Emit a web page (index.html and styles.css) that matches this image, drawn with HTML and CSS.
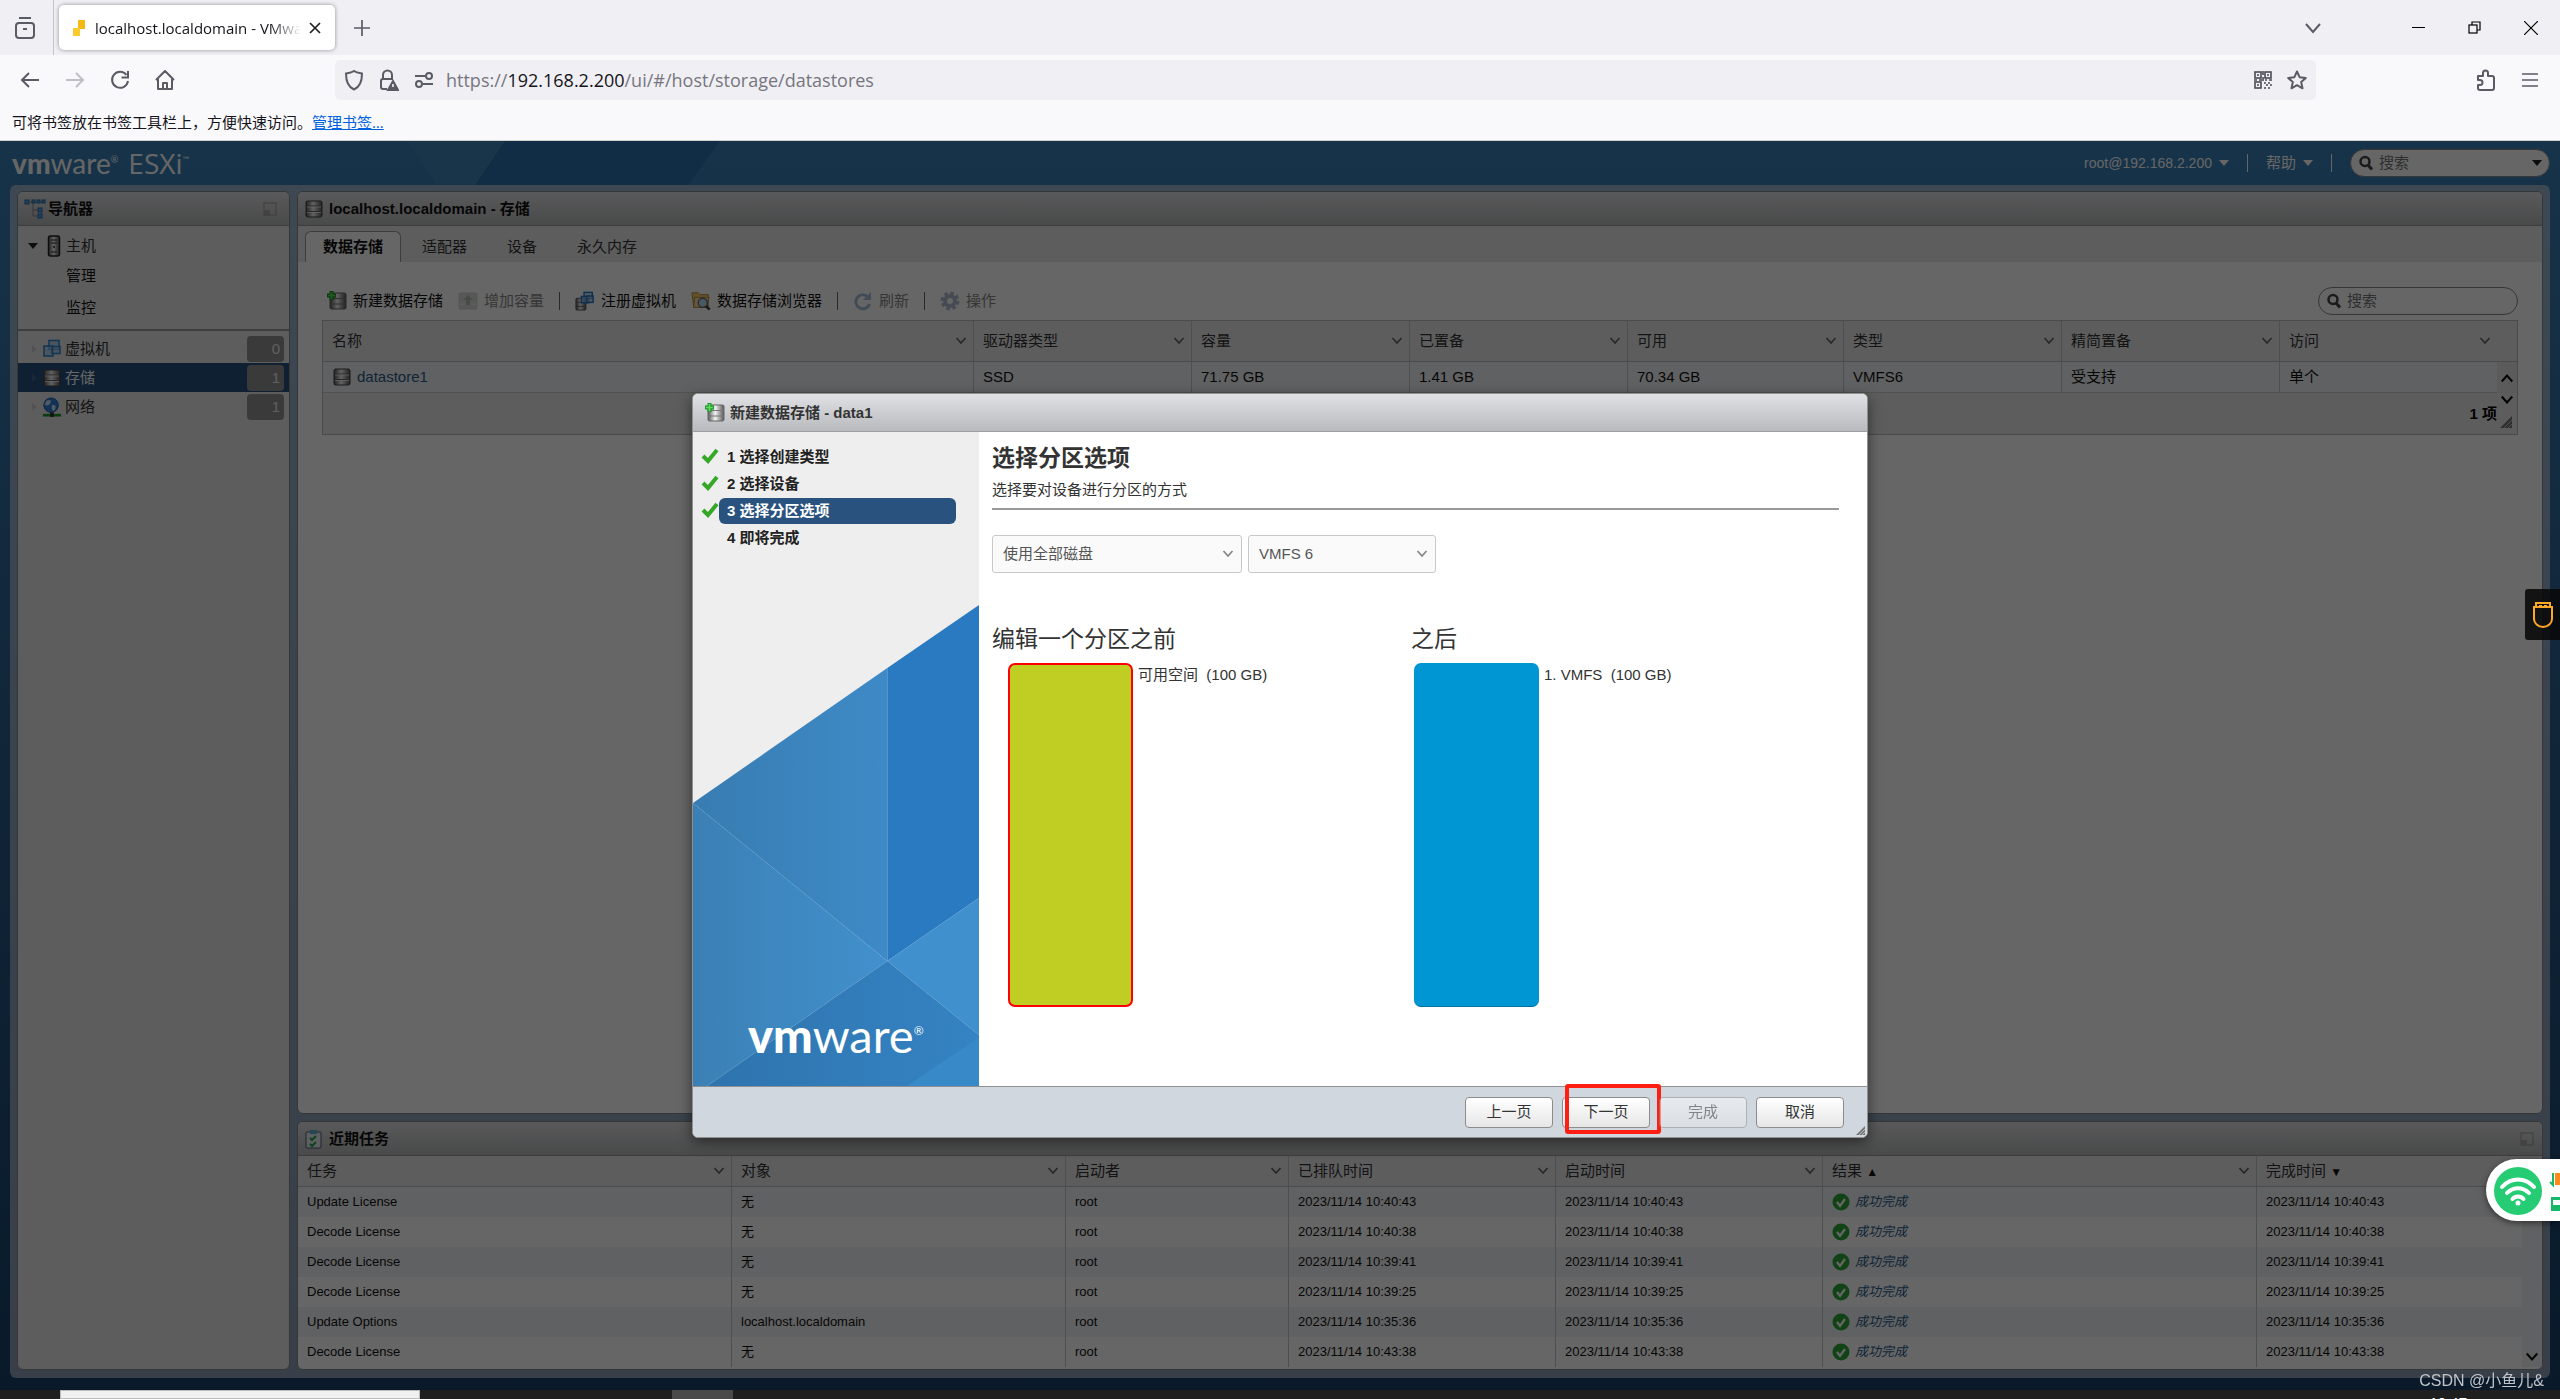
FILE: index.html
```html
<!DOCTYPE html>
<html lang="zh-CN">
<head>
<meta charset="utf-8">
<title>localhost.localdomain - VMware ESXi</title>
<link rel="stylesheet" href="styles.css">
</head>
<body>
<svg class="sprite" aria-hidden="true">
  <defs>
    <linearGradient id="metal" x1="0" x2="1" y1="0" y2="0"><stop offset="0" stop-color="#555"/><stop offset=".45" stop-color="#f4f4f4"/><stop offset="1" stop-color="#555"/></linearGradient>
    <linearGradient id="left-blue" x1="0" x2="1" y1="0" y2="0"><stop offset="0" stop-color="#3b80b5"/><stop offset="1" stop-color="#4190cd"/></linearGradient>
    <linearGradient id="low-blue" x1="0" x2="1" y1="0" y2="0"><stop offset="0" stop-color="#2e74ae"/><stop offset="1" stop-color="#3583c3"/></linearGradient>
  </defs>
  <symbol id="i-store" viewBox="0 0 18 18"><rect x="1" y="1" width="16" height="16" rx="1.500" fill="url(#metal)" stroke="#444"/><path d="M2 6h14M2 11.500h14" stroke="#666"/><path d="M2 7h14M2 12.500h14" stroke="#fff" opacity=".7"/></symbol>
  <symbol id="i-newstore" viewBox="0 0 20 20"><rect x="3" y="2" width="16" height="16" rx="1.500" fill="url(#metal)" stroke="#666"/><path d="M3 7.500h16M3 13h16" stroke="#777"/><path d="M4.500 0v9M0 4.500h9" stroke="#1f9a2c" stroke-width="4"/><path d="M4.500 1v7M1 4.500h7" stroke="#5fdc5f" stroke-width="1.500"/></symbol>
  <symbol id="i-grow" viewBox="0 0 20 20"><rect x="1" y="2" width="18" height="16" rx="1.500" fill="#b5bdb5" stroke="#a5aaa5"/><path d="M1 13h18" stroke="#ddd"/><path d="M10 4l-5 5h3v5h4V9h3z" fill="#6c746c"/></symbol>
  <symbol id="i-vms" viewBox="0 0 20 20"><g fill="#9cc8ee" fill-opacity=".6" stroke="#3587cf" stroke-width="1.600"><rect x="7" y="1.500" width="10" height="9"/><rect x="2" y="7" width="9" height="10"/><rect x="10" y="7.500" width="8" height="7"/></g></symbol>
  <symbol id="i-register" viewBox="0 0 22 22"><rect x="1" y="8" width="11" height="13" rx="1" fill="url(#metal)" stroke="#555"/><path d="M1 12.500h11M1 17h11" stroke="#666"/><g fill="#9cc8ee" fill-opacity=".6" stroke="#2878c6" stroke-width="1.600"><rect x="10" y="1.500" width="9" height="7"/><rect x="7" y="6" width="8" height="7"/><rect x="13" y="5.500" width="7" height="7"/></g></symbol>
  <symbol id="i-browse" viewBox="0 0 22 22"><path d="M1 2h7l2 2h9v14H3z" fill="#f3ca75" stroke="#b5842b"/><path d="M4 7h16l-3 11H3z" fill="#fbdf9f" stroke="#b5842b"/><circle cx="13" cy="13" r="5" fill="#b9dcf5" stroke="#667" stroke-width="1.500"/><path d="M16.500 16.500l4 4" stroke="#444" stroke-width="3"/></symbol>
  <symbol id="i-refresh" viewBox="0 0 20 20"><path d="M15 6a7 7 0 1 0 1.500 7" fill="none" stroke="#4f7fb5" stroke-width="3"/><path d="M18 1v8h-8z" fill="#4f7fb5"/></symbol>
  <symbol id="i-gear" viewBox="0 0 20 20"><circle cx="10" cy="10" r="7.500" fill="none" stroke="#5f7ca0" stroke-width="4" stroke-dasharray="3.400 2.500"/><circle cx="10" cy="10" r="5" fill="none" stroke="#5f7ca0" stroke-width="4"/></symbol>
  <symbol id="i-tree" viewBox="0 0 22 20"><path d="M4 3h16M9 3v14h5M9 11h5" fill="none" stroke="#888"/><g fill="#59a6df" stroke="#246ba8"><rect x="1" y="1" width="4" height="4"/><rect x="8" y="1" width="3" height="3"/><rect x="13" y="1" width="3" height="3"/><rect x="18" y="1" width="3" height="3"/><rect x="14" y="9" width="4" height="4"/><rect x="14" y="15" width="4" height="4"/></g></symbol>
  <symbol id="i-host" viewBox="0 0 14 22"><rect x="1.500" y="1" width="11" height="20" rx="2" fill="url(#metal)" stroke="#222" stroke-width="1.500"/><path d="M4 5h6M4 8h6M4 17h6" stroke="#333"/><circle cx="7" cy="12" r="1" fill="#333"/></symbol>
  <symbol id="i-net" viewBox="0 0 22 22"><circle cx="10" cy="9" r="8" fill="#2f7fd8" stroke="#1d55a0"/><path d="M5 4c4-2 6 0 4 3s-5 3-6 1zM11 9c4-1 5 2 3 5s-4-1-3-5z" fill="#cfe6fa"/><path d="M1 20h20" stroke="#1d9a2c" stroke-width="3"/><path d="M9 17h4v5H9z" fill="#333"/></symbol>
  <symbol id="i-tasks" viewBox="0 0 18 20"><rect x="1" y="3" width="15" height="16" rx="1" fill="#e6f1f5" stroke="#557"/><path d="M5 1h7v4H5z" fill="#5fb0d6"/><path d="M5 9l2 2 4-4M5 15l2 2 4-4" fill="none" stroke="#2ea043" stroke-width="2"/></symbol>
  <symbol id="i-check" viewBox="0 0 18 18"><path d="M2 8l5 5L16 2" fill="none" stroke="#35a828" stroke-width="4"/></symbol>
  <symbol id="i-ok" viewBox="0 0 18 18"><circle cx="9" cy="9" r="8.500" fill="#2fa83a"/><path d="M5 9l3 4 5-7" fill="none" stroke="#fff" stroke-width="2.200"/></symbol>
  <symbol id="i-chev" viewBox="0 0 12 12"><path d="M1.500 3L6 8 10.500 3" fill="none" stroke="currentColor" stroke-width="1.800"/></symbol>
  <symbol id="i-mag" viewBox="0 0 16 16"><circle cx="7" cy="6.500" r="4.500" fill="none" stroke="currentColor" stroke-width="2.500"/><path d="M10 10l4 4.500" stroke="currentColor" stroke-width="3"/></symbol>
  <symbol id="i-dock" viewBox="0 0 14 14"><rect x="1" y="1" width="12" height="12" fill="none" stroke="#888" stroke-width="1.500"/><path d="M1 8h6v6H1z" fill="#888"/></symbol>
  <symbol id="i-grip" viewBox="0 0 12 12"><path d="M12 0v12H0z" fill="#777"/><path d="M12 4l-8 8M12 8l-4 4" stroke="#ccc"/></symbol>
</svg>

<header class="browser">
  <div class="tabstrip">
    <button class="ib view" aria-label="Firefox View"><svg width="20" height="24" viewBox="0 0 20 24" fill="none" stroke="#5b5b66" stroke-width="2"><rect x="1" y="7" width="18" height="15" rx="3"/><path d="M4 2h12M8 13h4"/></svg></button>
    <div class="tab">
      <svg width="16" height="18" viewBox="0 0 16 18"><path d="M7 1h7v9H7z" fill="#f5b915"/><path d="M2 9h7v8H2z" fill="#fbcb2e"/></svg>
      <span class="tab-title">localhost.localdomain - VMware ESXi</span>
      <button class="ib" aria-label="关闭标签页"><svg width="12" height="12" viewBox="0 0 12 12" stroke="#222" stroke-width="1.700"><path d="M1 1l10 10M11 1L1 11"/></svg></button>
    </div>
    <button class="ib" aria-label="新标签页"><svg width="16" height="16" viewBox="0 0 16 16" stroke="#5b5b66" stroke-width="1.700"><path d="M8 0v16M0 8h16"/></svg></button>
    <div class="win">
      <button class="ib" aria-label="标签列表"><svg width="16" height="12" viewBox="0 0 16 12" fill="none" stroke="#5b5b66" stroke-width="2"><path d="M1 2l7 8 7-8"/></svg></button>
      <button class="ib" aria-label="最小化"><svg width="13" height="12" viewBox="0 0 13 12" stroke="#000"><path d="M0 5.500h13"/></svg></button>
      <button class="ib" aria-label="还原"><svg width="13" height="13" viewBox="0 0 13 13" fill="none" stroke="#000" stroke-width="1.200"><path d="M4 4V1h8v8H9"/><rect x="1" y="4" width="8" height="8"/></svg></button>
      <button class="ib" aria-label="关闭"><svg width="14" height="14" viewBox="0 0 14 14" stroke="#000" stroke-width="1.200"><path d="M0 0l14 14M14 0L0 14"/></svg></button>
    </div>
  </div>
  <div class="navbar">
    <div class="nav-left">
      <button class="ib" aria-label="后退"><svg width="20" height="20" viewBox="0 0 20 20" fill="none" stroke="#5b5b66" stroke-width="2"><path d="M19 10H2M9 3l-7 7 7 7"/></svg></button>
      <button class="ib" aria-label="前进"><svg width="20" height="20" viewBox="0 0 20 20" fill="none" stroke="#bfbfc8" stroke-width="2"><path d="M1 10h17M11 3l7 7-7 7"/></svg></button>
      <button class="ib" aria-label="刷新"><svg width="20" height="20" viewBox="0 0 20 20" fill="none" stroke="#5b5b66" stroke-width="2"><path d="M16.500 5A8 8 0 1 0 18 11"/><path d="M18 1v6.500h-6.500"/></svg></button>
      <button class="ib" aria-label="主页"><svg width="20" height="20" viewBox="0 0 20 20" fill="none" stroke="#5b5b66" stroke-width="2" stroke-linejoin="round"><path d="M1 10l9-9 9 9M3 9v10h14V9M8 19v-6h4v6"/></svg></button>
    </div>
    <div class="urlbar">
      <svg width="20" height="22" viewBox="0 0 20 22" fill="none" stroke="#5b5b66" stroke-width="2"><path d="M10 2c3 2 5 2 8 2.500C18 12 16 18 10 20.500 4 18 2 12 2 4.500 5 4 7 4 10 2z"/></svg>
      <svg width="20" height="22" viewBox="0 0 20 22" fill="none" stroke="#5b5b66" stroke-width="2"><path d="M8 20H4a2 2 0 0 1-2-2v-6a2 2 0 0 1 2-2h10M4 10V6a4.500 4.500 0 0 1 9 0v4"/><path d="M14 12l5 9H9z" fill="#5b5b66"/><path d="M14 15v3" stroke="#fff" stroke-width="1.500"/></svg>
      <svg width="20" height="18" viewBox="0 0 20 18" fill="none" stroke="#5b5b66" stroke-width="2"><path d="M1 5h10M9 13h10"/><circle cx="15" cy="5" r="3"/><circle cx="5" cy="13" r="3"/></svg>
      <div class="url">https://<b>192.168.2.200</b>/ui/#/host/storage/datastores</div>
      <svg width="18" height="18" viewBox="0 0 18 18" fill="none" stroke="#4b4b55" stroke-width="1.600"><rect x="1" y="1" width="6" height="6"/><rect x="11" y="1" width="6" height="6"/><rect x="1" y="11" width="6" height="6"/><path d="M3 4h2M13 4h2M3 14h2M9 0v4M9 6v4M0 9h3M5 9h3M11 9h2M15 9h3M10 12h2M14 12h2M12 14h2M16 14h2M10 17h2M14 17h2"/></svg>
      <svg width="20" height="20" viewBox="0 0 20 20" fill="none" stroke="#5b5b66" stroke-width="2" stroke-linejoin="round"><path d="M10 1.500l2.600 5.700 6.200.7-4.600 4.200 1.300 6.200L10 15.200l-5.500 3.100 1.300-6.200L1.200 7.900l6.200-.7z"/></svg>
    </div>
    <div class="nav-right">
      <button class="ib" aria-label="扩展"><svg width="20" height="22" viewBox="0 0 20 22" fill="none" stroke="#5b5b66" stroke-width="2" stroke-linejoin="round"><path d="M2 7h5V4a2.500 2.500 0 0 1 5 0v3h4a2 2 0 0 1 2 2v10a2 2 0 0 1-2 2H4a2 2 0 0 1-2-2v-3h2a2.500 2.500 0 0 0 0-5H2z"/></svg></button>
      <button class="ib" aria-label="菜单"><svg width="16" height="16" viewBox="0 0 16 16" stroke="#5b5b66" stroke-width="1.600"><path d="M0 2h16M0 8h16M0 14h16"/></svg></button>
    </div>
  </div>
  <div class="bookmarks">可将书签放在书签工具栏上，方便快速访问。<a href="#">管理书签…</a></div>
</header>

<main class="app">
  <div class="topbar">
    <svg class="facets" viewBox="0 0 800 44" width="800" height="44" aria-hidden="true"><path d="M408 0h97l-30 44h-38z" fill="#3f86ba"/><path d="M505 0h215l-32 44H475z" fill="#2c70ae"/></svg>
    <div class="brand"><b>vm</b>ware<sup>®</sup> <span>ESXi</span><sup>™</sup></div>
    <div class="account">
      <button class="menu user">root@192.168.2.200 <i class="tri"></i></button>
      <i class="sep"></i>
      <button class="menu">帮助 <i class="tri"></i></button>
      <i class="sep"></i>
      <label class="search"><svg width="16" height="16"><use href="#i-mag"/></svg><input type="text" placeholder="搜索" aria-label="全局搜索"><i class="tri dark"></i></label>
    </div>
  </div>

  <div class="workspace">
    <aside class="panel nav">
      <h2 class="panel-head"><svg width="22" height="20"><use href="#i-tree"/></svg>导航器<svg class="dock" width="14" height="14"><use href="#i-dock"/></svg></h2>
      <nav class="tree">
        <div class="group">
          <a href="#" class="row host"><i class="tri dark"></i><svg width="18" height="22"><use href="#i-host"/></svg>主机</a>
          <a href="#" class="row child">管理</a>
          <a href="#" class="row child last">监控</a>
        </div>
        <a href="#" class="row item"><i class="tri side"></i><svg width="20" height="20"><use href="#i-vms"/></svg><span>虚拟机</span><b class="badge">0</b></a>
        <a href="#" class="row item active"><i class="tri side"></i><svg width="18" height="18"><use href="#i-store"/></svg><span>存储</span><b class="badge">1</b></a>
        <a href="#" class="row item"><i class="tri side"></i><svg width="20" height="20"><use href="#i-net"/></svg><span>网络</span><b class="badge">1</b></a>
      </nav>
    </aside>

    <div class="column">
      <section class="panel main">
        <h2 class="panel-head"><svg width="20" height="18"><use href="#i-store"/></svg>localhost.localdomain - 存储</h2>
        <div class="tabs">
          <button class="on">数据存储</button><button>适配器</button><button>设备</button><button>永久内存</button>
        </div>
        <div class="content">
          <div class="toolbar">
            <button><svg width="20" height="20"><use href="#i-newstore"/></svg>新建数据存储</button>
            <button disabled><svg width="20" height="20"><use href="#i-grow"/></svg>增加容量</button>
            <i class="sep"></i>
            <button><svg width="20" height="20"><use href="#i-register"/></svg>注册虚拟机</button>
            <button><svg width="20" height="20"><use href="#i-browse"/></svg>数据存储浏览器</button>
            <i class="sep"></i>
            <button disabled><svg width="20" height="20"><use href="#i-refresh"/></svg>刷新</button>
            <i class="sep"></i>
            <button disabled><svg width="20" height="20"><use href="#i-gear"/></svg>操作</button>
            <label class="search plain"><svg width="16" height="16"><use href="#i-mag"/></svg><input type="text" placeholder="搜索" aria-label="搜索数据存储"></label>
          </div>
          <div class="grid-box">
            <table class="grid stores">
              <colgroup><col><col class="w218"><col class="w218"><col class="w218"><col class="w216"><col class="w218"><col class="w218"><col class="w217"><col class="w20"></colgroup>
              <thead><tr>
                <th>名称<svg class="chev" width="12" height="12"><use href="#i-chev"/></svg></th>
                <th>驱动器类型<svg class="chev" width="12" height="12"><use href="#i-chev"/></svg></th>
                <th>容量<svg class="chev" width="12" height="12"><use href="#i-chev"/></svg></th>
                <th>已置备<svg class="chev" width="12" height="12"><use href="#i-chev"/></svg></th>
                <th>可用<svg class="chev" width="12" height="12"><use href="#i-chev"/></svg></th>
                <th>类型<svg class="chev" width="12" height="12"><use href="#i-chev"/></svg></th>
                <th>精简置备<svg class="chev" width="12" height="12"><use href="#i-chev"/></svg></th>
                <th class="end">访问<svg class="chev" width="12" height="12"><use href="#i-chev"/></svg></th>
                <th class="end"></th>
              </tr></thead>
              <tbody><tr>
                <td><a href="#"><svg width="20" height="18"><use href="#i-store"/></svg>datastore1</a></td><td>SSD</td><td>71.75 GB</td><td>1.41 GB</td><td>70.34 GB</td><td>VMFS6</td><td>受支持</td><td class="end">单个</td>
                <td class="end scroll"><svg width="14" height="14" class="up"><use href="#i-chev"/></svg></td>
              </tr></tbody>
            </table>
            <div class="grid-foot"><b>1 项</b><span class="ends"><svg width="14" height="14"><use href="#i-chev"/></svg><svg width="12" height="12"><use href="#i-grip"/></svg></span></div>
          </div>
        </div>
      </section>

      <section class="panel tasks">
        <h2 class="panel-head"><svg width="20" height="20"><use href="#i-tasks"/></svg>近期任务<svg class="dock" width="14" height="14"><use href="#i-dock"/></svg></h2>
        <table class="grid task-grid">
          <colgroup><col class="w434"><col class="w334"><col class="w223"><col class="w267"><col class="w267"><col><col class="w265"><col class="w20"></colgroup>
          <thead><tr>
            <th>任务<svg class="chev" width="12" height="12"><use href="#i-chev"/></svg></th>
            <th>对象<svg class="chev" width="12" height="12"><use href="#i-chev"/></svg></th>
            <th>启动者<svg class="chev" width="12" height="12"><use href="#i-chev"/></svg></th>
            <th>已排队时间<svg class="chev" width="12" height="12"><use href="#i-chev"/></svg></th>
            <th>启动时间<svg class="chev" width="12" height="12"><use href="#i-chev"/></svg></th>
            <th>结果 <small>▲</small><svg class="chev" width="12" height="12"><use href="#i-chev"/></svg></th>
            <th class="end">完成时间 <small>▼</small></th>
            <th class="end"></th>
          </tr></thead>
          <tbody>
            <tr><td>Update License</td><td>无</td><td>root</td><td>2023/11/14 10:40:43</td><td>2023/11/14 10:40:43</td><td><a href="#" class="res"><svg width="18" height="18"><use href="#i-ok"/></svg><em>成功完成</em></a></td><td class="end">2023/11/14 10:40:43</td><td class="end bar" rowspan="6"><svg width="14" height="14"><use href="#i-chev"/></svg></td></tr>
            <tr><td>Decode License</td><td>无</td><td>root</td><td>2023/11/14 10:40:38</td><td>2023/11/14 10:40:38</td><td><a href="#" class="res"><svg width="18" height="18"><use href="#i-ok"/></svg><em>成功完成</em></a></td><td class="end">2023/11/14 10:40:38</td></tr>
            <tr><td>Decode License</td><td>无</td><td>root</td><td>2023/11/14 10:39:41</td><td>2023/11/14 10:39:41</td><td><a href="#" class="res"><svg width="18" height="18"><use href="#i-ok"/></svg><em>成功完成</em></a></td><td class="end">2023/11/14 10:39:41</td></tr>
            <tr><td>Decode License</td><td>无</td><td>root</td><td>2023/11/14 10:39:25</td><td>2023/11/14 10:39:25</td><td><a href="#" class="res"><svg width="18" height="18"><use href="#i-ok"/></svg><em>成功完成</em></a></td><td class="end">2023/11/14 10:39:25</td></tr>
            <tr><td>Update Options</td><td>localhost.localdomain</td><td>root</td><td>2023/11/14 10:35:36</td><td>2023/11/14 10:35:36</td><td><a href="#" class="res"><svg width="18" height="18"><use href="#i-ok"/></svg><em>成功完成</em></a></td><td class="end">2023/11/14 10:35:36</td></tr>
            <tr><td>Decode License</td><td>无</td><td>root</td><td>2023/11/14 10:43:38</td><td>2023/11/14 10:43:38</td><td><a href="#" class="res"><svg width="18" height="18"><use href="#i-ok"/></svg><em>成功完成</em></a></td><td class="end">2023/11/14 10:43:38</td></tr>
          </tbody>
        </table>
      </section>
    </div>
  </div>

  <div class="overlay">
    <section class="dialog" role="dialog" aria-labelledby="dlg-title">
      <h2 class="dlg-head" id="dlg-title"><svg width="20" height="20"><use href="#i-newstore"/></svg>新建数据存储 - data1</h2>
      <div class="dlg-body">
        <aside class="steps">
          <ol>
            <li><svg width="18" height="18"><use href="#i-check"/></svg><span>1 选择创建类型</span></li>
            <li><svg width="18" height="18"><use href="#i-check"/></svg><span>2 选择设备</span></li>
            <li class="current"><svg width="18" height="18"><use href="#i-check"/></svg><span>3 选择分区选项</span></li>
            <li><i></i><span>4 即将完成</span></li>
          </ol>
          <div class="art">
            <svg viewBox="0 0 287 481" preserveAspectRatio="none" aria-hidden="true">
              <path d="M0 198L195 63V356z" fill="url(#left-blue)"/><path d="M0 198L195 63V356z" fill="#2c64a0" opacity=".12"/>
              <path d="M195 63L287 0V293L195 356z" fill="#2a7ac2"/>
              <path d="M0 198L195 356 14 481H0z" fill="url(#left-blue)"/>
              <path d="M195 356L287 293V430z" fill="#4090ce"/>
              <path d="M195 356L287 430V481H14z" fill="url(#low-blue)"/>
              <path d="M287 432V481H215z" fill="#3789c8"/>
            </svg>
            <div class="art-logo"><b>vm</b>ware<sup>®</sup></div>
          </div>
        </aside>
        <div class="pane">
          <h1>选择分区选项</h1>
          <p class="desc">选择要对设备进行分区的方式</p>
          <div class="selects">
            <label class="pick disk"><select aria-label="磁盘使用方式"><option>使用全部磁盘</option></select><svg width="12" height="12"><use href="#i-chev"/></svg></label>
            <label class="pick fs"><select aria-label="文件系统"><option>VMFS 6</option></select><svg width="12" height="12"><use href="#i-chev"/></svg></label>
          </div>
          <div class="compare">
            <div><h3>编辑一个分区之前</h3><div class="part before"><i></i><span>可用空间&nbsp; (100 GB)</span></div></div>
            <div><h3>之后</h3><div class="part after"><i></i><span>1. VMFS&nbsp; (100 GB)</span></div></div>
          </div>
        </div>
      </div>
      <footer class="dlg-foot">
        <button>上一页</button><div class="next"><button>下一页</button></div><button disabled>完成</button><button>取消</button>
        <svg class="grip" width="9" height="9"><use href="#i-grip"/></svg>
      </footer>
    </section>
  </div>
</main>

<footer class="taskbar"><i class="thumb"></i><i class="slot"></i><span class="clock">10:47</span></footer>

<div class="float usb"><svg width="20" height="28" viewBox="0 0 20 28" fill="none" stroke="#ffa726" stroke-width="2"><path d="M1 6h18v12c0 4-4 8-9 8s-9-4-9-8zM3 6V2h14v4M6 5h3M11 5h3"/></svg></div>
<div class="float wifi">
  <svg width="76" height="62" viewBox="0 0 76 62"><circle cx="32" cy="32" r="24" fill="#25cc73"/><g fill="none" stroke="#fff" stroke-width="4" stroke-linecap="round"><path d="M16 28c9-10 23-10 32 0M21 34c6-6.500 16-6.500 22 0M26.500 40c3-3.500 8-3.500 11 0"/></g><circle cx="32" cy="44" r="2.500" fill="#fff"/><path d="M67 14v12l-3-3" fill="none" stroke="#14b866" stroke-width="2"/><path d="M69 14v12h7V14z" fill="#ff8a1e"/><path d="M65 38h11v14H65z" fill="#14b866"/><path d="M67 41h9v5h-9z" fill="#fff"/></svg>
</div>
<div class="float mark">CSDN @小鱼儿&amp;</div>
</body>
</html>
```
FILE: styles.css
```css
* { box-sizing: border-box; }
body {
  margin: 0;
  height: 100vh;
  display: flex;
  flex-direction: column;
  overflow: hidden;
  font: 15px/20px "Liberation Sans", "Noto Sans CJK SC", sans-serif;
  color: #333;
}
svg { flex: none; display: block; }
i { font-style: normal; }
button, input, select { font: inherit; color: inherit; }
button { background: none; border: 0; padding: 0; }
a { color: inherit; text-decoration: none; }
h1, h2, h3, p, ol { margin: 0; padding: 0; }
.sprite { position: absolute; width: 0; height: 0; }
.ib { display: flex; align-items: center; justify-content: center; }

/* browser chrome */
.browser { background: #f9f9fb; color: #15141a; font-family: "Open Sans", "Noto Sans CJK SC", sans-serif; border-bottom: 1px solid #cfd2cc; }
.tabstrip { display: flex; align-items: center; height: 55px; background: #f0eff4; }
.view { width: 54px; height: 55px; padding-right: 4px; border-right: 1px solid #c4c4cc; margin-right: 5px; }
.tab { display: flex; align-items: center; gap: 8px; width: 276px; height: 45px; padding: 0 14px 0 12px; margin-right: 19px; background: #fff; border-radius: 5px; box-shadow: 0 0 4px rgba(0,0,0,.4); }
.tab-title { flex: 1; white-space: nowrap; overflow: hidden; mask-image: linear-gradient(90deg, #000 85%, transparent); }
.win { display: flex; margin-left: auto; margin-right: 22px; gap: 43px; align-items: center; }
.win .ib:first-child { margin-right: 48px; }
.navbar { display: flex; align-items: center; height: 50px; }
.nav-left { display: flex; gap: 25px; width: 335px; padding-left: 20px; }
.urlbar { flex: 1; display: flex; align-items: center; gap: 15px; height: 40px; padding: 0 9px; background: #f0eff4; border-radius: 5px; }
.url { flex: 1; margin-left: -3px; font-size: 18px; line-height: 24px; color: #77767e; }
.url b { font-weight: 400; color: #15141a; }
.nav-right { display: flex; align-items: center; gap: 26px; width: 244px; padding-right: 22px; justify-content: flex-end; }
.bookmarks { height: 35px; padding: 7px 12px; }
.bookmarks a { color: #0061e0; text-decoration: underline; }

/* application frame */
.app { position: relative; flex: 1; min-height: 0; display: flex; flex-direction: column; padding: 0 10px 12px; background: linear-gradient(#3a80b8, #2c6090 45%, #18406a); }
.topbar { position: relative; display: flex; align-items: center; justify-content: space-between; height: 44px; color: #fff; }
.facets { position: absolute; left: -10px; top: 0; }
.brand { position: relative; padding-left: 2px; font: 400 28px/30px Lato, sans-serif; }
.brand b { font-weight: 900; }
.brand span { margin-left: 3px; font: 400 28px/30px "Open Sans", sans-serif; }
.brand sup { font-size: 9px; line-height: 0; vertical-align: 11px; }
.account { display: flex; align-items: center; gap: 18px; }
.menu { display: flex; align-items: center; gap: 7px; }
.user { font-size: 14px; }
.sep { width: 1px; height: 18px; background: currentColor; }
.tri { border: 5px solid transparent; border-top: 6px solid currentColor; border-bottom: 0; }
.tri.dark { color: #222; }
.tri.side { border: 4px solid transparent; border-left: 5px solid #ccc; border-right: 0; margin-right: 2px; }
.active .tri.side { border-left-color: #3d6490; }
.search { display: flex; align-items: center; gap: 5px; width: 200px; height: 28px; padding: 0 7px; color: #444; border: 1px solid #888; border-radius: 14px; background: #fff; }
.search input { flex: 1; min-width: 0; border: 0; padding: 0; background: none; outline: 0; }
.search input::placeholder { color: #777; opacity: 1; }
.workspace { flex: 1; min-height: 0; display: flex; gap: 7px; padding: 6px 7px 8px; border-radius: 6px; background: linear-gradient(#98b4cf, #8c9eb4); }
.column { flex: 1; min-width: 0; display: flex; flex-direction: column; gap: 7px; }
.panel { display: flex; flex-direction: column; overflow: hidden; border: 1px solid #888; border-radius: 6px; background: #fff; }
.panel-head { display: flex; align-items: center; gap: 5px; height: 34px; padding: 0 8px 0 6px; font-size: 15px; line-height: 20px; font-weight: 700; color: #111; background: linear-gradient(#dfe0e3, #b8b9bb); border-bottom: 1px solid #999; }
.dock { margin-left: auto; opacity: .5; }
.nav { width: 273px; background: #e8e9eb; }
.nav .panel-head { gap: 2px; padding-right: 12px; }
.group { padding: 5px 0 4px; border-bottom: 2px solid #999; margin-bottom: 3px; }
.row { display: flex; align-items: center; height: 30px; padding-left: 10px; }
.host .tri { margin-right: 7px; }
.host svg { margin-right: 3px; }
.child { height: 29px; padding-left: 48px; color: #111; }
.last { height: 35px; }
.item { height: 29px; gap: 3px; padding-left: 14px; padding-right: 5px; }
.item svg { width: 20px; }
.item.active { background: #29527f; color: #fff; }
.badge { width: 37px; height: 26px; margin-left: auto; padding: 3px 4px; text-align: right; font-weight: 400; color: #eee; background: #929292; border-radius: 4px; }
.main { flex: 1; min-height: 0; }
.tabs { display: flex; align-items: flex-end; height: 36px; padding: 0 7px; background: #e8e9eb; }
.tabs button { height: 31px; padding: 0 20px; }
.tabs .on { padding: 0 17px; margin-right: 1px; font-weight: 700; color: #111; background: #fff; border: 1px solid #999; border-bottom: 0; border-radius: 6px 6px 0 0; }
.content { padding: 24px 24px 0; }
.toolbar { display: flex; align-items: center; gap: 15px; height: 34px; padding: 0 0 4px 5px; color: #111; }
.toolbar button { display: flex; align-items: center; gap: 6px; }
.toolbar button:disabled { color: #888; }
.toolbar button:disabled svg { opacity: .5; }
.toolbar .sep { background: #666; }
.plain { margin-left: auto; }
.grid-box { border: 1px solid #bbb; background: #e8e9eb; }
.grid { width: 100%; table-layout: fixed; border-spacing: 0; }
.grid th, .grid td { padding: 0 9px; text-align: left; font-weight: 400; border-right: 1px solid #c4c5c8; overflow: hidden; white-space: nowrap; }
.grid th { height: 41px; background: #e8e9eb; border-bottom: 1px solid #bbb; }
.grid td { color: #111; }
.grid .end { border-right: 0; }
.stores td { height: 31px; background: #f1f2f4; border-bottom: 1px solid #ccc; }
.stores a { display: flex; gap: 5px; align-items: center; color: #2b5c8c; }
.stores .scroll { padding: 0 3px; background: #e4e4e4; border-bottom: 0; }
.up { transform: rotate(180deg); }
.chev { float: right; margin: 4px -3px 0 0; color: #666; }
.grid small { font-size: 12px; color: #111; }
.grid-foot { display: flex; justify-content: flex-end; height: 41px; color: #000; line-height: 41px; }
.ends { display: flex; flex-direction: column; justify-content: space-between; width: 20px; padding: 0 0 6px 3px; }
.w20 { width: 20px; } .w216 { width: 216px; } .w217 { width: 217px; } .w218 { width: 218px; }
.w223 { width: 223px; } .w265 { width: 265px; } .w267 { width: 267px; } .w334 { width: 334px; } .w434 { width: 434px; }
.tasks { height: 249px; }
.task-grid th { height: 31px; }
.task-grid td { height: 30px; font-size: 13px; }
.task-grid tbody tr:nth-child(odd) td { background: #f0f2f4; }
.task-grid tbody .bar { vertical-align: bottom; padding: 0 3px 3px; background: #e8e9eb; }
.res { display: flex; align-items: center; gap: 5px; color: #2b5c8c; }

/* modal wizard */
.overlay { position: absolute; inset: 0; display: grid; place-items: center; background: rgba(0,0,0,.6); }
.dialog { display: flex; flex-direction: column; width: 1176px; height: 745px; overflow: hidden; background: #fff; border: 1px solid #909090; border-radius: 6px; box-shadow: 0 4px 14px rgba(0,0,0,.5); }
.dlg-head { display: flex; align-items: center; gap: 5px; height: 38px; padding-left: 12px; font-size: 15px; line-height: 20px; background: linear-gradient(#dfe1e5, #b9babd); border-bottom: 1px solid #a0a0a0; }
.dlg-body { flex: 1; min-height: 0; display: flex; }
.steps { display: flex; flex-direction: column; justify-content: space-between; width: 286px; background: #eee; }
.steps ol { list-style: none; padding: 11px 23px 0 8px; font-weight: 700; color: #222; }
.steps li { display: flex; align-items: center; height: 27px; }
.steps li span { flex: 1; padding: 3px 8px; border-radius: 6px; }
.steps li i { width: 18px; }
.steps .current span { background: #29527f; color: #fff; }
.art { display: grid; }
.art > * { grid-area: 1 / 1; }
.art > svg { width: 100%; height: 481px; }
.art-logo { align-self: end; padding: 0 0 26px 55px; font: 400 47px/50px Lato, sans-serif; color: #fff; }
.art-logo b { font-weight: 900; }
.art-logo sup { font-size: 12px; line-height: 0; vertical-align: 18px; }
.pane { flex: 1; padding: 10px 28px 0 13px; }
.pane h1 { font-size: 23px; line-height: 32px; }
.desc { padding: 6px 0 8px; border-bottom: 2px solid #999; }
.selects { display: flex; gap: 6px; padding: 25px 0 49px; }
.pick { display: flex; align-items: center; }
.pick svg { margin-left: -20px; color: #888; pointer-events: none; }
.pick select { height: 38px; padding: 0 10px; color: #555; background: #fafafa; border: 1px solid #c8c8c8; border-radius: 3px; appearance: none; }
.disk select { width: 250px; }
.fs select { width: 188px; }
.pick.disk { width: 250px; }
.compare { display: grid; grid-template-columns: 419px 1fr; }
.compare h3 { font-size: 23px; line-height: 34px; font-weight: 400; padding-bottom: 7px; }
.part { display: flex; gap: 5px; padding-left: 16px; }
.part i { width: 125px; height: 344px; border-radius: 7px; }
.part span { padding-top: 2px; }
.before i { background: #c0cd23; border: 2px solid #f00; }
.after { padding-left: 3px; }
.after i { background: #0095d3; border-bottom: 1px solid #0072a3; }
.dlg-foot { position: relative; display: flex; align-items: center; justify-content: flex-end; gap: 9px; height: 51px; padding-right: 23px; background: #d0d7df; border-top: 1px solid #909090; }
.dlg-foot button { width: 88px; height: 31px; background: linear-gradient(#fff, #e6e6e6); border: 1px solid #8c8c8c; border-radius: 4px; }
.dlg-foot button:disabled { opacity: .5; }
.next { position: relative; }
.next::after { content: ""; position: absolute; inset: -13px -11px -6px 3px; border: 4px solid #ff1e12; border-radius: 3px; }
.grip { position: absolute; right: 2px; bottom: 2px; }

/* desktop layer */
.taskbar { display: flex; height: 9px; padding-left: 60px; overflow: hidden; background: #1f1f1f; }
.thumb { width: 360px; background: #f0f0f0; border: 1px solid #bbb; margin-right: 252px; }
.slot { width: 61px; background: #4a4a4a; }
.clock { margin: 3px 93px 0 auto; color: #fff; }
.float { position: fixed; right: 0; display: flex; align-items: center; }
.usb { top: 589px; width: 35px; height: 51px; padding-left: 8px; background: rgba(8,8,8,.88); border-radius: 3px 0 0 3px; }
.wifi { top: 1159px; height: 62px; width: 74px; overflow: hidden; background: #fff; border-radius: 31px 0 0 31px; box-shadow: 0 2px 6px rgba(0,0,0,.5); }
.mark { right: 16px; bottom: 6px; font-size: 16px; line-height: 24px; color: #c0c4c8; }
```
